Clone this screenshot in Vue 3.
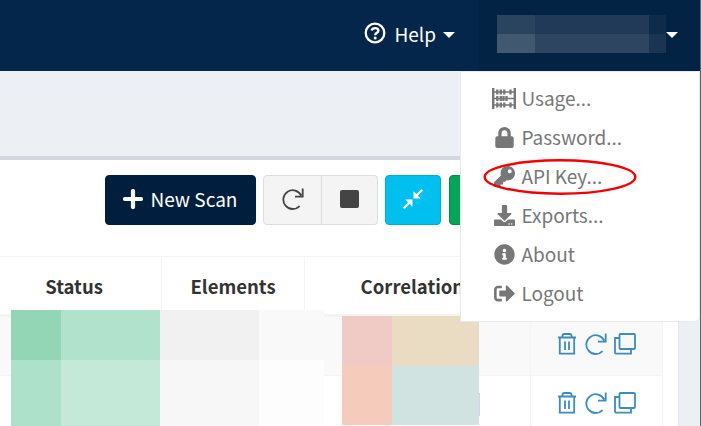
<script setup>
const menu = [
  { icon: 'usage', label: 'Usage...' },
  { icon: 'lock', label: 'Password...' },
  { icon: 'key', label: 'API Key...', marked: true },
  { icon: 'download', label: 'Exports...' },
  { icon: 'info', label: 'About' },
  { icon: 'logout', label: 'Logout' },
]
const glyphs = {
  lock: 'M400 224h-24v-72C376 68.2 307.8 0 224 0S72 68.2 72 152v72H48c-26.5 0-48 21.5-48 48v192c0 26.5 21.5 48 48 48h352c26.5 0 48-21.5 48-48V272c0-26.5-21.500-48-48-48zm-104 0H152v-72c0-39.700 32.300-72 72-72s72 32.300 72 72v72z',
  key: 'M512 176.001C512 273.203 433.202 352 336 352c-11.220 0-22.190-1.062-32.827-3.069l-24.012 27.014A23.999 23.999 0 0 1 261.223 384H224v40c0 13.255-10.745 24-24 24h-40v40c0 13.255-10.745 24-24 24H24c-13.255 0-24-10.745-24-24v-78.059c0-6.365 2.529-12.470 7.029-16.971l161.802-161.802C163.108 213.814 160 195.271 160 176 160 78.798 238.797.001 335.999 0 433.488-.001 512 78.511 512 176.001zM336 128c0 26.510 21.490 48 48 48s48-21.490 48-48-21.490-48-48-48-48 21.490-48 48z',
  download: 'M216 0h80c13.300 0 24 10.700 24 24v168h87.700c17.800 0 26.700 21.500 14.100 34.100L269.700 378.300c-7.500 7.500-19.800 7.500-27.300 0L90.100 226.100c-12.600-12.600-3.700-34.100 14.100-34.100H192V24c0-13.300 10.700-24 24-24zm296 376v112c0 13.300-10.700 24-24 24H24c-13.300 0-24-10.700-24-24V376c0-13.300 10.700-24 24-24h146.700l49 49c20.100 20.100 52.500 20.100 72.600 0l49-49H488c13.300 0 24 10.700 24 24zm-124 88c0-11-9-20-20-20s-20 9-20 20 9 20 20 20 20-9 20-20zm64 0c0-11-9-20-20-20s-20 9-20 20 9 20 20 20 20-9 20-20z',
  info: 'M256 8C119.043 8 8 119.083 8 256c0 136.997 111.043 248 248 248s248-111.003 248-248C504 119.083 392.957 8 256 8zm0 110c23.196 0 42 18.804 42 42s-18.804 42-42 42-42-18.804-42-42 18.804-42 42-42zm56 254c0 6.627-5.373 12-12 12h-88c-6.627 0-12-5.373-12-12v-24c0-6.627 5.373-12 12-12h12v-64h-12c-6.627 0-12-5.373-12-12v-24c0-6.627 5.373-12 12-12h64c6.627 0 12 5.373 12 12v100h12c6.627 0 12 5.373 12 12v24z',
  logout: 'M497 273L329 441c-15 15-41 4.500-41-17v-96H152c-13.300 0-24-10.700-24-24v-96c0-13.300 10.700-24 24-24h136V88c0-21.400 25.900-32 41-17l168 168c9.300 9.400 9.300 24.600 0 34zM192 436v-40c0-6.600-5.400-12-12-12H96c-17.700 0-32-14.300-32-32V160c0-17.700 14.300-32 32-32h84c6.600 0 12-5.400 12-12V76c0-6.600-5.400-12-12-12H96c-53 0-96 43-96 96v192c0 53 43 96 96 96h84c6.600 0 12-5.400 12-12z',
}
</script>

<template>
  <div class="page">
    <header class="topbar">
      <div class="help">
        <svg class="help-icon" viewBox="0 0 22 22"><circle cx="11" cy="11" r="9.300" fill="none" stroke="currentColor" stroke-width="2.300" /><path d="M7.600 8.600C8.300 5.400 14.400 5.200 14.400 8.700C14.400 11 11.200 10.700 11.200 13.200" fill="none" stroke="currentColor" stroke-width="2.400" /><circle cx="11.200" cy="15.900" r="1.500" fill="currentColor" /></svg>
        <span>Help</span><i class="caret"></i>
      </div>
      <div class="account">
        <div class="name-blocks"><i v-for="n in 6" :key="n" :class="'n' + n"></i></div>
        <i class="caret"></i>
      </div>
    </header>
    <div class="crumbs"></div>
    <main class="box">
      <div class="tools">
        <button class="btn new">
          <svg class="plus" viewBox="0 0 20 20"><path d="M10 2V18M2 10H18" stroke="currentColor" stroke-width="4.200" stroke-linecap="round" /></svg>
          <span>New Scan</span>
        </button>
        <div class="group">
          <button class="btn seg reload"><svg class="line-icon" viewBox="0 0 22 22"><path d="M17.600 18A9.400 9.400 0 1 1 19.200 7.500M20.700 .5V8.600H13" /></svg></button>
          <button class="btn seg stop"><i></i></button>
        </div>
        <button class="btn compress">
          <svg viewBox="0 0 20 20"><path d="M1.500 18.500L6.500 13.500M18.500 1.500L13.500 6.500" stroke="currentColor" stroke-width="2.400" stroke-linecap="round" /><path d="M2.300 10.500H9.500V17.700ZM10.500 2.300V9.500H17.700Z" fill="currentColor" /></svg>
        </button>
        <button class="btn green"></button>
      </div>
      <div class="table">
        <div class="row head"><div>Status</div><div>Elements</div><div class="corr">Correlations</div><div></div></div>
        <div v-for="r in 2" :key="r" class="row" :class="{ odd: r === 1 }">
          <div></div><div></div><div></div>
          <div class="actions">
            <svg class="line-icon" viewBox="0 0 22 22"><path d="M2 4.500H20M6.500 4V2.800Q6.500 1 8.300 1H13.700Q15.500 1 15.500 2.800V4M3.800 5V20.600H18.200V5M9 8.500V17M13 8.500V17" /></svg>
            <svg class="line-icon" viewBox="0 0 22 22"><path d="M17.600 18A9.400 9.400 0 1 1 19.200 7.500M20.700 .5V8.600H13" /></svg>
            <svg class="line-icon" viewBox="0 0 22 22"><path d="M6.500 1H20Q21 1 21 2V15Q21 16 20 16H6.500Q5.500 16 5.500 15V2Q5.500 1 6.500 1ZM5.500 5H1V19.500Q1 20.700 2 20.700H17V16" /></svg>
          </div>
        </div>
      </div>
    </main>
    <div class="mosaic left"><i v-for="n in 8" :key="n" :class="'l' + n"></i></div>
    <div class="mosaic right"><i v-for="n in 4" :key="n" :class="'r' + n"></i></div>
    <i class="sliver"></i>
    <nav class="menu">
      <div v-for="m in menu" :key="m.icon" class="item">
        <span class="icon-cell">
          <svg v-if="m.icon === 'usage'" class="abacus" viewBox="0 0 24 21"><path d="M1.200 0V21M22.800 0V21" stroke="currentColor" stroke-width="2.400" /><path d="M2 4H22M2 10.500H22M2 17H22" stroke="currentColor" stroke-width="1.400" /><path d="M5.300 1.500V6.500M8.800 1.500V6.500M12.300 1.500V6.500M18.500 1.500V6.500M5.300 8V13M8.800 8V13M14.500 8V13M11.500 8V13M5.300 14.500V19.500M8.800 14.500V19.500M12.300 14.500V19.500M18.500 14.500V19.500" stroke="currentColor" stroke-width="2.300" /></svg>
          <svg v-else class="solid" :viewBox="m.icon === 'lock' ? '-32 0 512 512' : '0 0 512 512'"><path :d="glyphs[m.icon]" fill="currentColor" /></svg>
        </span>
        <span class="label">{{ m.label }}</span>
        <svg v-if="m.marked" class="ring" viewBox="0 0 154 38"><ellipse cx="77" cy="19" rx="75.300" ry="16.700" fill="none" stroke="#f40000" stroke-width="2.400" /></svg>
      </div>
    </nav>
    <i class="edge"></i>
  </div>
</template>

<style>
body { margin: 0; overflow: hidden; }
</style>

<style scoped>
* { box-sizing: border-box; }
.page { position: relative; width: 701px; height: 426px; overflow: hidden; background: #ecf0f5; font-family: "Noto Sans CJK SC", "Noto Sans", sans-serif; font-size: 19px; color: #333; }
i { display: block; }
.topbar { display: flex; height: 71px; background: #03264a; color: #fff; }
.help { width: 478px; padding: 0 23px 5px 0; display: flex; align-items: center; justify-content: flex-end; }
.help span { padding-bottom: 0; }
.help-icon { width: 22px; height: 22px; margin-right: 8px; }
.caret { width: 0; height: 0; border: 6px solid transparent; border-top-color: #fff; border-bottom: 0; margin-top: 2px; }
.help .caret { margin: 3px 0 0 7px; }
.account { flex: 1; background: #022344; display: flex; align-items: center; padding: 0 0 3px 19px; }
.name-blocks { display: grid; grid-template: 19px 19px / 38px 114px 17px; }
.n1 { background: #2a435f; } .n2 { background: #203a58; } .n3 { background: #0d2b4a; }
.n4 { background: #405971; } .n5 { background: #2d4560; } .n6 { background: #1a3552; }
.crumbs { height: 85px; }
.box { width: 679px; height: 270px; background: #fff; border-top: 4px solid #d2d6de; border-right: 1px solid #e5e8ed; }
.tools { display: flex; padding: 15px 0 0 105px; height: 96px; }
.btn { height: 50px; border: 1px solid #ddd; border-radius: 4px; padding: 0 0 2px; display: flex; align-items: center; justify-content: center; font: inherit; color: #fff; flex: none; }
.new { width: 151px; background: #001f3f; border-color: #001f3f; gap: 8px; padding: 0 1px 3px 0; }
.plus { width: 20px; height: 20px; margin-top: 1px; }
.group { display: flex; margin: 0 7px; }
.seg { background: #f4f4f4; color: #444; }
.reload { width: 59px; border-radius: 4px 0 0 4px; padding-left: 1px; }
.stop { width: 56px; border-left: 0; border-radius: 0 4px 4px 0; }
.stop i { width: 19px; height: 18px; border-radius: 2px; background: #444; }
.line-icon { width: 22px; height: 22px; fill: none; stroke: currentColor; stroke-width: 1.8; }
.compress { width: 56px; background: #00c0ef; border-color: #00acd6; margin-right: 8px; }
.compress svg { width: 20px; height: 20px; }
.green { width: 56px; background: #00a65a; border-color: #008d4c; }
.table { width: 663px; border-top: 1px solid #f4f4f4; }
.row { display: grid; grid-template-columns: 162px 143px 226px 132px; height: 59px; border-bottom: 1px solid #f4f4f4; }
.row > div { border-right: 1px solid #f4f4f4; display: flex; align-items: center; justify-content: center; }
.head { height: 60px; border-bottom: 3px solid #f4f4f4; font-weight: 700; font-size: 18.5px; }
.head > div:first-child { padding-right: 13px; }
.head > .corr { padding-right: 1px; }
.odd { background: #f9f9f9; }
.row > .actions { gap: 7px; padding: 0 2px 5px 0; }
.mosaic { position: absolute; display: grid; }
.left { left: 11px; top: 310px; grid-template: 50px 66px / 50px 99px 99px 65px; }
.l1 { background: #92d6b6; } .l2 { background: #b1e2cc; } .l3 { background: #f1f1f1; } .l4 { background: #f9f9f9; }
.l5 { background: #ade1ca; } .l6 { background: #c5e9d9; } .l7 { background: #f7f7f7; } .l8 { background: #fdfdfd; }
.right { left: 342px; top: 316px; grid-template: 50px 59px / 50px 87px; }
.r1 { background: #f0cbc6; } .r2 { background: #eadbc3; } .r3 { background: #f5cbbb; } .r4 { background: #d0e3e0; }
.sliver { position: absolute; left: 479px; top: 393px; width: 1px; height: 23px; background: #d5d4e4; }
.menu { position: absolute; left: 460px; top: 71px; width: 240px; height: 251px; padding: 7px 0 0 29px; background: #fff; border: 1px solid #e9eaed; border-radius: 0 0 5px 0; color: #777; }
.item { height: 39px; display: flex; align-items: center; position: relative; }
.icon-cell { width: 28px; display: flex; justify-content: center; margin-right: 3.5px; }
.label { padding-bottom: 2px; letter-spacing: -.05px; }
.abacus { width: 24px; height: 21px; }
.solid { width: 21px; height: 21px; }
.ring { position: absolute; left: -7px; top: 1px; width: 154px; height: 38px; }
.actions .line-icon { color: #3c8dbc; }
.edge { position: absolute; right: 0; top: 0; width: 1px; height: 426px; background: #606469; }
</style>
